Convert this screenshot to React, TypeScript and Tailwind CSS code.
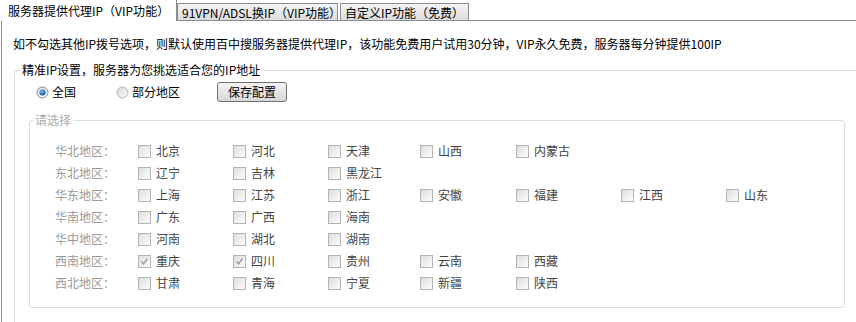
import React from "react";

const regions: [string, string[]][] = [
    ["华北地区：", ["北京", "河北", "天津", "山西", "内蒙古"]],
    ["东北地区：", ["辽宁", "吉林", "黑龙江"]],
    ["华东地区：", ["上海", "江苏", "浙江", "安徽", "福建", "江西", "山东"]],
    ["华南地区：", ["广东", "广西", "海南"]],
    ["华中地区：", ["河南", "湖北", "湖南"]],
    ["西南地区：", ["重庆", "四川", "贵州", "云南", "西藏"]],
    ["西北地区：", ["甘肃", "青海", "宁夏", "新疆", "陕西"]],
];

const checkedSet = ["重庆", "四川"];

function Radio({ on }: { on?: boolean }) {
    return (
        <svg width="13" height="13" viewBox="0 0 13 13" className="shrink-0">
            <defs>
                <linearGradient id={on ? "rg-on" : "rg-off"} x1="0" y1="0" x2="1" y2="1">
                    <stop offset="0" stopColor="#d6d6d6" />
                    <stop offset="1" stopColor="#fcfcfc" />
                </linearGradient>
                <radialGradient id="dot" cx="0.4" cy="0.35" r="0.7">
                    <stop offset="0" stopColor="#8fd0ff" />
                    <stop offset="0.5" stopColor="#2c7fd0" />
                    <stop offset="1" stopColor="#0f4a8c" />
                </radialGradient>
            </defs>
            <circle cx="6.5" cy="6.5" r="5.5" fill={`url(#${on ? "rg-on" : "rg-off"})`} stroke={on ? "#8a8a8a" : "#b4b4b4"} />
            {on && <circle cx="6.5" cy="6.5" r="3" fill="url(#dot)" />}
        </svg>
    );
}

function Check({ label }: { label: string }) {
    const on = checkedSet.includes(label);
    return (
        <span className="flex items-center gap-[5px]">
            <span className="flex h-[13px] w-[13px] shrink-0 items-center justify-center border border-[#b4b4b4] bg-linear-to-br from-[#dedede] to-[#fdfdfd]">
                {on && (
                    <svg width="9" height="9" viewBox="0 0 9 9">
                        <path d="M1.5 4.5 L3.5 7 L7.5 1.5" fill="none" stroke="#9a9a9a" strokeWidth="1.3" />
                    </svg>
                )}
            </span>
            <span className="text-[#444]">{label}</span>
        </span>
    );
}

export default function App() {
    return (
        <div className="h-[322px] w-[856px] overflow-hidden bg-white text-[12px] leading-[14px] text-black font-[Noto_Sans_CJK_SC,sans-serif]">
            {/* tabs */}
            <div className="flex h-[20px] items-end">
                <div className="relative z-10 -mb-px h-[21px] w-[177px] border-r border-[#898c95] bg-white pl-[8px] pt-[4px]">
                    服务器提供代理IP（VIP功能）
                </div>
                <div className="h-[17px] w-[161px] border border-b-0 border-[#898c95] bg-linear-to-b from-[#f4f4f4] to-[#dcdcdc] pl-[4px] pt-[2px]">
                    91VPN/ADSL换IP（VIP功能）
                </div>
                <div className="ml-[2px] h-[17px] w-[129px] border border-b-0 border-[#898c95] bg-linear-to-b from-[#f4f4f4] to-[#dcdcdc] pl-[4px] pt-[2px]">
                    自定义IP功能（免费）
                </div>
            </div>

            <div className="ml-px h-[400px] border-l border-t border-[#898c95] pt-[16px]">
                <div className="pl-[11px]">
                    如不勾选其他IP拨号选项，则默认使用百中搜服务器提供代理IP，该功能免费用户试用30分钟，VIP永久免费，服务器每分钟提供100IP
                </div>

                <fieldset className="ml-[12px] mt-[12px] h-[400px] w-[900px] rounded-[3px] border border-[#d5dfe6] pl-[5px] pt-[5px]">
                    <legend className="px-[2px]">精准IP设置，服务器为您挑选适合您的IP地址</legend>

                    <div className="flex h-[20px] items-center pl-[16px]">
                        <Radio on />
                        <span className="ml-[3px]">全国</span>
                        <span className="ml-[40px]">
                            <Radio />
                        </span>
                        <span className="ml-[3px]">部分地区</span>
                        <button className="ml-[37px] h-[20px] w-[70px] rounded-[3px] border border-[#707070] bg-linear-to-b from-[#f3f3f3] to-[#d8d8d8] text-[12px] leading-[18px]">
                            保存配置
                        </button>
                    </div>

                    <fieldset className="ml-[9px] mt-[11px] w-[816px] rounded-[3px] border border-[#d5dfe6] pb-[13px] pl-[3px] pt-[13px]">
                        <legend className="px-[2px] text-[#aaa]">请选择</legend>
                        <div className="pl-[22px]">
                            {regions.map(([name, items]) => (
                                <div key={name} className="grid h-[22px] grid-cols-[83px_95px_95px_92px_96px_105px_105px_1fr] items-center">
                                    <span className="text-[#999]">{name}</span>
                                    {items.map((item) => (
                                        <Check key={item} label={item} />
                                    ))}
                                </div>
                            ))}
                        </div>
                    </fieldset>
                </fieldset>
            </div>
        </div>
    );
}
